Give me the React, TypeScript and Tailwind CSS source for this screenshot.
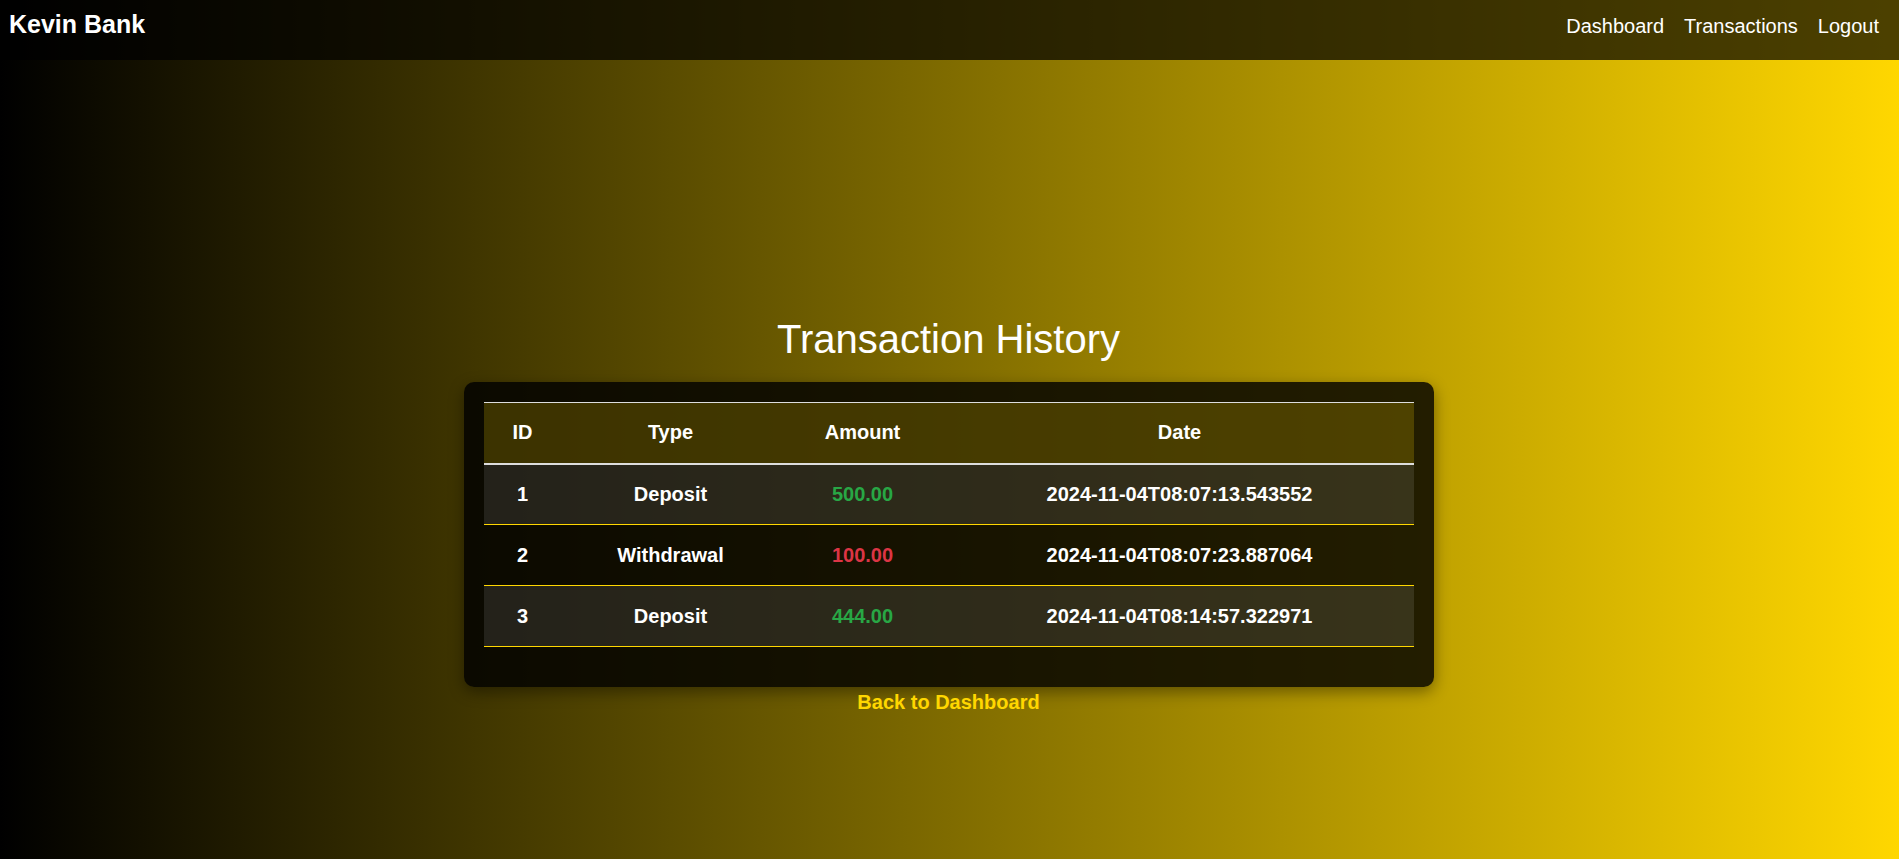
import React from "react";

const rows = [
  { id: 1, type: "Deposit", amount: "500.00", date: "2024-11-04T08:07:13.543552", dep: true },
  { id: 2, type: "Withdrawal", amount: "100.00", date: "2024-11-04T08:07:23.887064", dep: false },
  { id: 3, type: "Deposit", amount: "444.00", date: "2024-11-04T08:14:57.322971", dep: true },
];

export default function App() {
  return (
    <div
      className="min-h-[859px] w-full bg-[linear-gradient(to_right,#000000,#FFD700)] text-white"
      style={{ fontFamily: '"Liberation Sans", Arial, sans-serif' }}
    >
      <nav className="flex h-[60px] items-baseline justify-between bg-[rgba(0,0,0,0.7)] pl-[9px] pr-[20px] pt-[10px]">
        <div className="text-[25px] font-bold leading-[29px]">Kevin Bank</div>
        <div className="flex items-baseline gap-[20px] text-[20px] leading-[23px]">
          <a className="text-white">Dashboard</a>
          <a className="text-white">Transactions</a>
          <a className="text-white">Logout</a>
        </div>
      </nav>
      <main className="flex flex-col items-center pr-[2px] pt-[256px]">
        <h1 className="text-[40px] font-normal leading-[46px]">Transaction History</h1>
        <div className="mt-[20px] w-[970px] rounded-[10px] bg-[rgba(0,0,0,0.82)] p-[20px] pb-[40px] shadow-[0_5px_15px_rgba(0,0,0,0.4)]">
          <table className="w-[930px] table-fixed border-collapse text-[20px] font-bold leading-[23px]">
            <colgroup>
              <col className="w-[78px]" />
              <col className="w-[218px]" />
              <col className="w-[166px]" />
              <col className="w-[468px]" />
            </colgroup>
            <thead>
              <tr className="h-[61px] border-t border-b-2 border-t-[#dddddd] border-b-[#dddddd] bg-[rgba(255,215,0,0.2)]">
                <th className="p-0 text-center font-bold">ID</th>
                <th className="p-0 text-center font-bold">Type</th>
                <th className="p-0 text-center font-bold">Amount</th>
                <th className="p-0 text-center font-bold">Date</th>
              </tr>
            </thead>
            <tbody>
              {rows.map((r, i) => (
                <tr
                  key={r.id}
                  className={
                    "h-[61px] border-b border-b-[#FFD700] " +
                    (i % 2 === 0 ? "bg-[rgba(255,255,255,0.1)]" : "bg-transparent")
                  }
                >
                  <td className="p-0 text-center">{r.id}</td>
                  <td className="p-0 text-center">{r.type}</td>
                  <td className={"p-0 text-center " + (r.dep ? "text-[#28a745]" : "text-[#dc3545]")}>
                    {r.amount}
                  </td>
                  <td className="p-0 text-center">{r.date}</td>
                </tr>
              ))}
            </tbody>
          </table>
        </div>
        <a className="mt-[4px] text-[20px] font-bold leading-[23px] text-[#FFD700]">Back to Dashboard</a>
      </main>
    </div>
  );
}
